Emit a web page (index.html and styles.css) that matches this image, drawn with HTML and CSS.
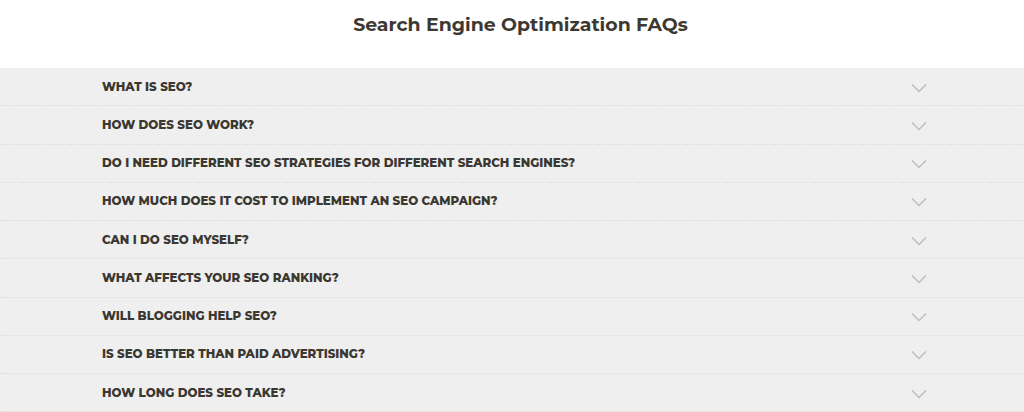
FILE: index.html
```html
<!DOCTYPE html>
<html lang="en">
<head>
<meta charset="utf-8">
<title>Search Engine Optimization FAQs</title>
<link rel="stylesheet" href="styles.css">
</head>
<body>
<section class="faq">
  <h2 class="faq-title">Search Engine Optimization FAQs</h2>
  <div class="faq-list">
    <div class="faq-row"><div class="faq-inner"><span class="faq-q">WHAT IS SEO?</span><svg class="chev" viewBox="0 0 16 10"><path d="M1 1.5 L8 8.5 L15 1.5"/></svg></div></div>
    <div class="faq-row"><div class="faq-inner"><span class="faq-q">HOW DOES SEO WORK?</span><svg class="chev" viewBox="0 0 16 10"><path d="M1 1.5 L8 8.5 L15 1.5"/></svg></div></div>
    <div class="faq-row"><div class="faq-inner"><span class="faq-q">DO I NEED DIFFERENT SEO STRATEGIES FOR DIFFERENT SEARCH ENGINES?</span><svg class="chev" viewBox="0 0 16 10"><path d="M1 1.5 L8 8.5 L15 1.5"/></svg></div></div>
    <div class="faq-row"><div class="faq-inner"><span class="faq-q">HOW MUCH DOES IT COST TO IMPLEMENT AN SEO CAMPAIGN?</span><svg class="chev" viewBox="0 0 16 10"><path d="M1 1.5 L8 8.5 L15 1.5"/></svg></div></div>
    <div class="faq-row"><div class="faq-inner"><span class="faq-q">CAN I DO SEO MYSELF?</span><svg class="chev" viewBox="0 0 16 10"><path d="M1 1.5 L8 8.5 L15 1.5"/></svg></div></div>
    <div class="faq-row"><div class="faq-inner"><span class="faq-q">WHAT AFFECTS YOUR SEO RANKING?</span><svg class="chev" viewBox="0 0 16 10"><path d="M1 1.5 L8 8.5 L15 1.5"/></svg></div></div>
    <div class="faq-row"><div class="faq-inner"><span class="faq-q">WILL BLOGGING HELP SEO?</span><svg class="chev" viewBox="0 0 16 10"><path d="M1 1.5 L8 8.5 L15 1.5"/></svg></div></div>
    <div class="faq-row"><div class="faq-inner"><span class="faq-q">IS SEO BETTER THAN PAID ADVERTISING?</span><svg class="chev" viewBox="0 0 16 10"><path d="M1 1.5 L8 8.5 L15 1.5"/></svg></div></div>
    <div class="faq-row"><div class="faq-inner"><span class="faq-q">HOW LONG DOES SEO TAKE?</span><svg class="chev" viewBox="0 0 16 10"><path d="M1 1.5 L8 8.5 L15 1.5"/></svg></div></div>
  </div>
</section>
</body>
</html>
```
FILE: styles.css
```css
html, body {
  margin: 0;
  padding: 0;
  background: #ffffff;
}
body {
  font-family: "Montserrat", "Inter", "Liberation Sans", sans-serif;
  color: #3b3731;
  overflow: hidden;
}
.faq-title {
  margin: 0;
  height: 68px;
  display: flex;
  align-items: center;
  justify-content: center;
  padding: 0 0 19px 17px;
  box-sizing: border-box;
  font-size: 18.9px;
  font-weight: 700;
  color: #3d3932;
}
.faq-list {
  background-color: #efefef;
  background-image: radial-gradient(circle, rgba(255,255,255,0.7) 0.6px, transparent 0.9px);
  background-size: 11px 11px;
}
.faq-row {
  height: 38.25px;
  box-sizing: border-box;
  border-bottom: 1px dotted #dcdcdc;
}
.faq-inner {
  width: 825px;
  margin-left: 102px;
  height: 100%;
  display: flex;
  align-items: center;
  justify-content: space-between;
}
.faq-q {
  font-size: 11.8px;
  font-weight: 800;
  color: #3b3731;
}
.chev {
  width: 16px;
  height: 10px;
  margin-top: 2px;
  fill: none;
  stroke: #bdbdbd;
  stroke-width: 1.5;
}
```
